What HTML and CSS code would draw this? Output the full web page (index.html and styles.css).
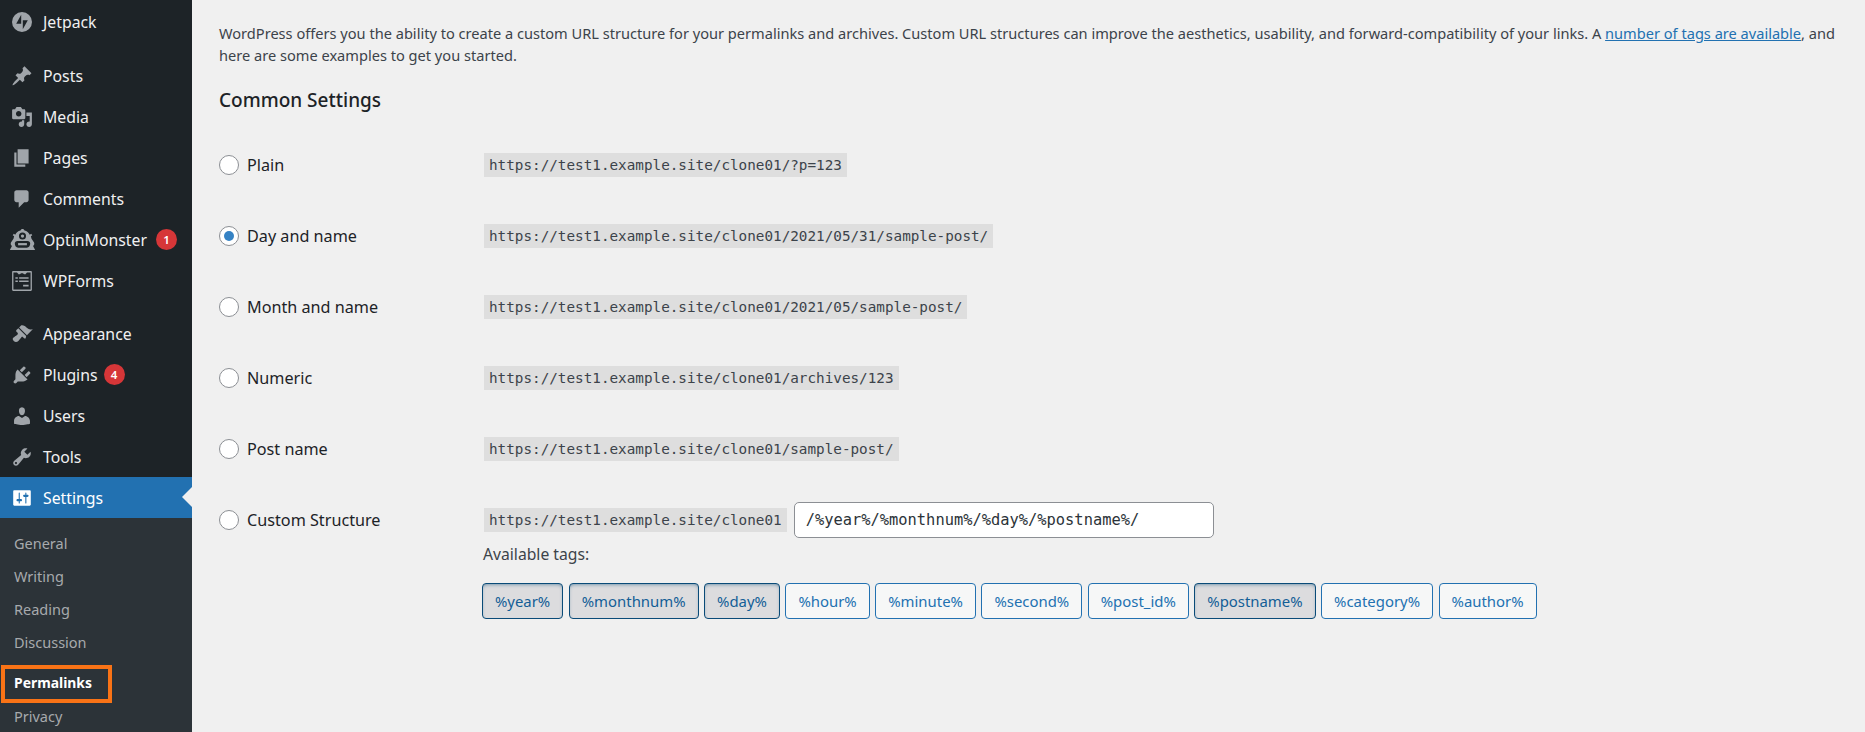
FILE: index.html
```html
<!DOCTYPE html>
<html lang="en">
<head>
<meta charset="utf-8">
<title>Permalink Settings</title>
<link rel="stylesheet" href="styles.css">
</head>
<body>
<div class="page">
  <nav class="sidebar">
    <a class="item gap-after"><svg class="ico ico-jet" viewBox="0 0 20 20"><path d="M10 0a10 10 0 1 0 0 20 10 10 0 0 0 0-20zM9.200 11.800H4.200L9.200 2.800zM10.800 17.200V8.200h5z" fill-rule="evenodd"/></svg><span>Jetpack</span></a>
    <a class="item"><svg class="ico" viewBox="0 0 20 20"><path d="M10.44 3.02l1.82-1.82 6.36 6.35-1.83 1.82c-1.05-.68-2.48-.57-3.41.36l-.75.75c-.92.93-1.04 2.35-.35 3.41l-1.83 1.82-2.41-2.41-2.8 2.79c-.42.42-3.38 2.71-3.8 2.29s1.86-3.39 2.28-3.81l2.79-2.79L4.1 9.36l1.83-1.82c1.05.69 2.48.57 3.4-.36l.75-.75c.93-.92 1.05-2.35.36-3.41z"/></svg><span>Posts</span></a>
    <a class="item"><svg class="ico" viewBox="0 0 20 20"><path d="M13 11V4c0-.55-.45-1-1-1h-1.67L9 1H5L3.67 3H2c-.55 0-1 .45-1 1v7c0 .55.45 1 1 1h10c.55 0 1-.45 1-1zM7 4.5c1.38 0 2.5 1.12 2.5 2.5S8.38 9.5 7 9.5 4.5 8.38 4.5 7 5.62 4.5 7 4.5zM14 6h5v10.5c0 1.38-1.12 2.5-2.5 2.5S14 17.88 14 16.5s1.12-2.5 2.5-2.5c.17 0 .34.02.5.05V9h-3V6zm-4 8.05V13h2v3.5c0 1.38-1.12 2.5-2.5 2.5S7 17.88 7 16.5 8.12 14 9.5 14c.17 0 .34.02.5.05z"/></svg><span>Media</span></a>
    <a class="item"><svg class="ico" viewBox="0 0 20 20"><path d="M6 15V2h10v13H6zm-1 1h8v2H3V5h2v11z"/></svg><span>Pages</span></a>
    <a class="item"><svg class="ico" viewBox="0 0 20 20"><path d="M5 2h9c1.1 0 2 .9 2 2v7c0 1.1-.9 2-2 2h-2l-5 5v-5H5c-1.1 0-2-.9-2-2V4c0-1.1.9-2 2-2z"/></svg><span>Comments</span></a>
    <a class="item"><svg class="ico ico-wide" viewBox="0 0 24 20"><path d="M12 0c.9 0 1.600.6 1.800 1.400 2.200.5 3.900 1.900 4.800 3.800l1.300-.8 1 1.200-1.300 1 .6 2.200 2.300 3.400c.5 1.200.1 2.400-.9 3.200l1.900 3.600H.5l1.900-3.600c-1-.8-1.400-2-.9-3.200l2.300-3.400.6-2.200-1.300-1 1-1.200 1.300.8c.9-1.900 2.600-3.300 4.800-3.800C10.400.6 11.100 0 12 0zM12 3.200a3.200 3.200 0 1 0 0 6.400 3.200 3.200 0 0 0 0-6.400zM7.500 11C6 11 5 12 5 13.400c0 1.600 1.200 3.600 3 3.600h8c1.800 0 3-2 3-3.600C19 12 18 11 16.500 11z" fill-rule="evenodd"/><circle cx="12" cy="6.400" r="1.500"/><path d="M8 12.800h8v2H8z"/></svg><span>OptinMonster</span><b class="badge">1</b></a>
    <a class="item gap-after gap-small"><svg class="ico ico-forms" viewBox="0 0 20 20"><path d="M2 1h16c.6 0 1 .4 1 1v16c0 .6-.4 1-1 1H2c-.6 0-1-.4-1-1V2c0-.6.4-1 1-1zm.2 1.200v15.600h15.600V2.200h-3.200L12.800 4 10 2.800 7.200 4 5.400 2.200zM4 6.500h2.200v1.400H4zm3.400 0H16v1.400H7.400zM4 9.500h2.200v1.400H4zm3.400 0H16v1.400H7.400zM11 13.500h5v1.400h-5z" fill-rule="evenodd"/></svg><span>WPForms</span></a>
    <a class="item"><svg class="ico" viewBox="0 0 20 20"><path d="M14.480 11.060L7.410 3.990l1.500-1.500c.5-.56 2.300-.47 3.510.32 1.210.8 1.430 1.280 2.910 2.100 1.180.64 2.450 1.260 4.450.85zm-.71.71L6.700 4.700 4.930 6.470c-.39.39-.39 1.020 0 1.410l1.060 1.060c.39.39.39 1.030 0 1.420-.6.6-1.430 1.110-2.210 1.690-.35.26-.7.53-1.010.84C1.430 13.230.99 14.830 2.500 16.340c1.510 1.510 3.110 1.070 4.450-.27.31-.31.58-.66.84-1.010.58-.78 1.090-1.610 1.690-2.210.39-.39 1.030-.39 1.420 0l1.060 1.060c.39.39 1.020.39 1.410 0z"/></svg><span>Appearance</span></a>
    <a class="item"><svg class="ico" viewBox="0 0 20 20"><path d="M13.110 4.360L9.870 7.600 8 5.730l3.240-3.240c.35-.34 1.050-.2 1.560.32.52.51.66 1.210.31 1.550zm-8 1.770l.91-1.120 9.010 9.010-1.190.84c-.71.71-2.630 1.160-3.820 1.160H6.140L4.900 17.260c-.59.59-1.540.59-2.120 0-.59-.58-.59-1.530 0-2.120l1.240-1.240v-3.880c0-1.130.4-3.190 1.090-3.890zm7.260 3.970l3.240-3.240c.34-.35 1.040-.21 1.550.31.52.51.66 1.210.31 1.550l-3.240 3.250z"/></svg><span>Plugins</span><b class="badge badge-tight">4</b></a>
    <a class="item"><svg class="ico" viewBox="0 0 20 20"><path d="M10 9.250c-2.270 0-2.730-3.440-2.730-3.440C7 4.020 7.820 2 9.970 2c2.160 0 2.980 2.020 2.710 3.810 0 0-.41 3.440-2.680 3.440zm0 2.570L12.720 10c2.390 0 4.520 2.330 4.520 4.530v2.490s-3.650 1.130-7.240 1.130c-3.650 0-7.240-1.130-7.240-1.130v-2.490c0-2.250 1.940-4.480 4.470-4.480z"/></svg><span>Users</span></a>
    <a class="item"><svg class="ico" viewBox="0 0 20 20"><path d="M16.680 9.770c-1.340 1.340-3.300 1.670-4.950.99l-5.410 6.520c-.99.99-2.590.99-3.580 0s-.99-2.590 0-3.570l6.520-5.420c-.68-1.650-.35-3.610.99-4.950 1.280-1.280 3.120-1.620 4.720-1.060l-2.890 2.890 2.820 2.820 2.860-2.870c.53 1.580.18 3.390-1.080 4.650zM3.810 16.210c.4.39 1.040.39 1.430 0 .4-.4.4-1.040 0-1.430-.39-.4-1.030-.4-1.430 0-.39.39-.39 1.030 0 1.430z"/></svg><span>Tools</span></a>
    <a class="item current"><svg class="ico" viewBox="0 0 20 20"><path d="M18 16V4c0-.55-.45-1-1-1H3c-.55 0-1 .45-1 1v12c0 .55.45 1 1 1h14c.55 0 1-.45 1-1zM8 11h1c.55 0 1 .45 1 1s-.45 1-1 1H8v1.500c0 .28-.22.5-.5.5s-.5-.22-.5-.5V13H6c-.55 0-1-.45-1-1s.45-1 1-1h1V5.500c0-.28.22-.5.5-.5s.5.22.5.5V11zm5-2h-1c-.55 0-1-.45-1-1s.45-1 1-1h1V5.500c0-.28.22-.5.5-.5s.5.22.5.5V7h1c.55 0 1 .45 1 1s-.45 1-1 1h-1v5.500c0 .28-.22.5-.5.5s-.5-.22-.5-.5V9z" fill-rule="evenodd"/></svg><span>Settings</span></a>
    <div class="submenu">
      <a>General</a>
      <a>Writing</a>
      <a>Reading</a>
      <a>Discussion</a>
      <a class="active">Permalinks</a>
      <a>Privacy</a>
    </div>
  </nav>
  <main class="content">
    <p class="intro">WordPress offers you the ability to create a custom URL structure for your permalinks and archives. Custom URL structures can improve the aesthetics, usability, and forward-compatibility of your links. A <a href="#">number of tags are available</a>, and here are some examples to get you started.</p>
    <h2>Common Settings</h2>
    <div class="rows">
      <div class="row"><label><i class="radio"></i>Plain</label><code>https://test1.example.site/clone01/?p=123</code></div>
      <div class="row"><label><i class="radio on"></i>Day and name</label><code>https://test1.example.site/clone01/2021/05/31/sample-post/</code></div>
      <div class="row"><label><i class="radio"></i>Month and name</label><code>https://test1.example.site/clone01/2021/05/sample-post/</code></div>
      <div class="row"><label><i class="radio"></i>Numeric</label><code>https://test1.example.site/clone01/archives/123</code></div>
      <div class="row"><label><i class="radio"></i>Post name</label><code>https://test1.example.site/clone01/sample-post/</code></div>
      <div class="row"><label><i class="radio"></i>Custom Structure</label><code>https://test1.example.site/clone01</code><div class="field">/%year%/%monthnum%/%day%/%postname%/</div></div>
    </div>
    <div class="tags">
      <p>Available tags:</p>
      <div class="tag-list">
        <button class="on">%year%</button>
        <button class="on">%monthnum%</button>
        <button class="on">%day%</button>
        <button>%hour%</button>
        <button>%minute%</button>
        <button>%second%</button>
        <button>%post_id%</button>
        <button class="on">%postname%</button>
        <button>%category%</button>
        <button>%author%</button>
      </div>
    </div>
  </main>
</div>
</body>
</html>
```
FILE: styles.css
```css
* { box-sizing: border-box; }
html, body { margin: 0; height: 732px; overflow: hidden; }
body { background: #f0f0f0; color: #3c434a; font-family: "Noto Sans", "Open Sans", sans-serif; font-size: 15px; }
.page { display: flex; height: 732px; }
.sidebar { width: 192px; flex: none; background: #1d2327; padding-top: 1px; }
.item { position: relative; display: flex; align-items: center; height: 41px; padding-left: 11px; color: #f0f0f1; font-size: 15.800px; }
.item.gap-after { margin-bottom: 13px; }
.item.gap-small { margin-bottom: 12px; }
.ico { width: 22px; height: 22px; flex: none; fill: #a0a5aa; margin-right: 10px; }
.ico-jet { width: 20px; height: 20px; margin-left: 1px; margin-right: 11px; }
.ico-wide { width: 27px; margin-left: -2px; margin-right: 7px; }
.badge { width: 21px; height: 21px; border-radius: 50%; background: #d63638; color: #fff; font-size: 11.500px; font-weight: 600; display: flex; align-items: center; justify-content: center; margin-left: 9px; }
.badge-tight { margin-left: 6px; }
.item.current { background: #2271b1; color: #fff; }
.item.current .ico { fill: #fff; }
.item.current::after { content: ""; position: absolute; right: 0; top: 10px; border: 10px solid transparent; border-left: 0; border-right-color: #f0f0f0; }
.submenu { background: #2c3338; padding-top: 9px; height: 216px; display: flex; flex-direction: column; }
.submenu a { height: 33px; line-height: 33px; padding-left: 14px; color: #a7aaad; font-size: 14.500px; flex: none; }
.submenu a.active { position: relative; color: #fff; font-weight: 700; font-size: 13.900px; height: 34px; line-height: 34px; margin-top: 7px; }
.submenu a.active::after { content: ""; box-sizing: border-box; position: absolute; left: 1px; top: -1px; width: 111px; height: 38px; border: 4px solid #f97316; }
.content { flex: 1; padding: 22px 15px 0 27px; min-width: 0; }
.intro { margin: 0; line-height: 22px; font-size: 14.600px; }
.intro a { color: #2271b1; text-decoration: underline; }
h2 { margin: 21px 0 0; font-size: 19px; line-height: 26px; font-weight: 500; color: #1d2327; }
.rows { margin-top: 16px; }
.row { display: flex; align-items: center; height: 71px; }
label { display: flex; align-items: center; width: 265px; flex: none; color: #1d2327; font-size: 16.200px; }
.radio { width: 20px; height: 20px; border-radius: 50%; background: #fff; border: 1px solid #8c8f94; margin-right: 8px; position: relative; flex: none; }
.radio.on::before { content: ""; position: absolute; left: 4px; top: 4px; width: 10px; height: 10px; border-radius: 50%; background: #3582c4; }
code { font-family: "DejaVu Sans Mono", "Liberation Mono", monospace; font-size: 14.300px; line-height: 24px; height: 24px; background: #dedede; padding: 0 5px; white-space: nowrap; color: #3c434a; }
.field { margin-left: 7px; width: 420px; height: 36px; border: 1px solid #8c8f94; border-radius: 5px; background: #fff; font-family: "DejaVu Sans Mono", "Liberation Mono", monospace; font-size: 15.400px; line-height: 34px; padding-left: 11px; color: #2c3338; }
.tags { margin-left: 264px; margin-top: -12px; }
.tags p { margin: 0; line-height: 22px; font-size: 15.700px; }
.tag-list { display: flex; gap: 5.500px; margin-top: 18px; margin-left: -1px; }
button { font: inherit; font-size: 14.900px; height: 36px; padding: 0 12px; background: #f6f7f7; border: 1px solid #2271b1; border-radius: 4px; color: #2271b1; }
button.on { background: #dcdcde; border-color: #0a4b78; color: #135e96; box-shadow: inset 0 2px 5px -3px #0a4b78; }
```
